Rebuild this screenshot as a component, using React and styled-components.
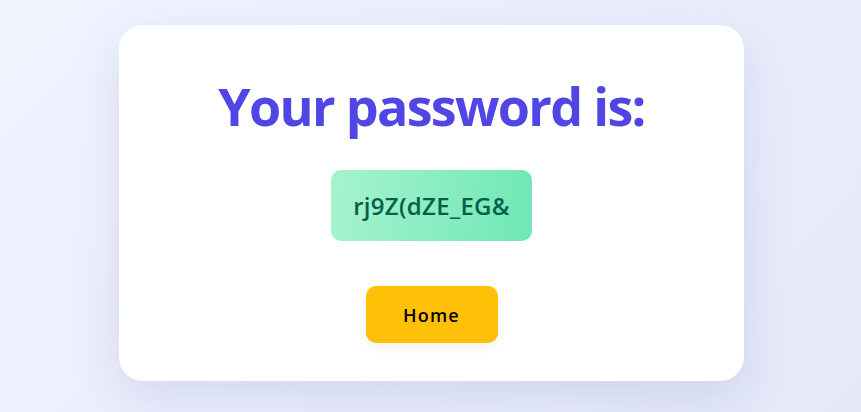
import React from 'react';
import styled, { createGlobalStyle } from 'styled-components';

const GlobalStyle = createGlobalStyle`
  * {
    box-sizing: border-box;
  }
  body {
    margin: 0;
    font-family: 'Open Sans', 'Noto Sans', sans-serif;
  }
`;

const Page = styled.div`
  min-height: 100vh;
  display: flex;
  align-items: center;
  justify-content: center;
  padding-left: 2px;
  background: linear-gradient(135deg, #f1f4ff 0%, #e4e8f8 100%);
`;

const Card = styled.div`
  width: 625px;
  height: 356px;
  margin-top: -6px;
  background: #ffffff;
  border-radius: 24px;
  box-shadow: 0 16px 48px rgba(70, 80, 160, 0.14);
  display: flex;
  flex-direction: column;
  align-items: center;
  padding-top: 47px;
`;

const Title = styled.h1`
  margin: 0;
  font-size: 52px;
  line-height: 68px;
  font-weight: 700;
  color: #4f46e5;
  letter-spacing: -1.7px;
`;

const PasswordBox = styled.div`
  margin-top: 30px;
  width: 201px;
  height: 71px;
  display: flex;
  align-items: center;
  justify-content: center;
  border-radius: 10px;
  background: linear-gradient(100deg, #a7f3d0 0%, #6ee7b7 100%);
  color: #065f46;
  font-size: 24px;
  font-weight: 600;
  letter-spacing: 0.3px;
`;

const HomeButton = styled.button`
  margin-top: 45px;
  width: 132px;
  height: 57px;
  border: none;
  border-radius: 10px;
  background: #ffc107;
  color: #000000;
  font-family: inherit;
  font-size: 18px;
  font-weight: 600;
  letter-spacing: 1.2px;
  box-shadow: 0 4px 12px rgba(0, 0, 0, 0.05);
  cursor: pointer;
`;

export default function App() {
  return (
    <>
      <GlobalStyle />
      <Page>
        <Card>
          <Title>Your password is:</Title>
          <PasswordBox>rj9Z(dZE_EG&amp;</PasswordBox>
          <HomeButton>Home</HomeButton>
        </Card>
      </Page>
    </>
  );
}
